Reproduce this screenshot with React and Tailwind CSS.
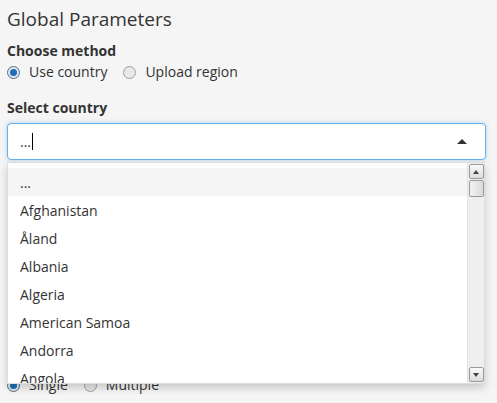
import React from "react";

const countries = ["...", "Afghanistan", "Åland", "Albania", "Algeria", "American Samoa", "Andorra", "Angola"];

const Radio = ({ checked, label }) => (
  <label className="flex items-center gap-[9px]">
    <span
      className={
        "w-[13px] h-[13px] rounded-full border flex items-center justify-center " +
        (checked ? "border-[#5b6b7a] bg-[#dfe8f0]" : "border-[#a0a0a0] bg-[#e8e8e8]")
      }
    >
      {checked && <span className="w-[7px] h-[7px] rounded-full bg-[#1e6fb8]" />}
    </span>
    <span>{label}</span>
  </label>
);

export default function App() {
  return (
    <div
      className="w-[497px] h-[403px] bg-[#f5f5f5] text-[#333] overflow-hidden relative"
      style={{ fontFamily: "'Open Sans', 'DejaVu Sans', sans-serif" }}
    >
      <div className="px-[7px] pt-[5px]">
        <h2 className="text-[19px] leading-[28px] text-[#333]">Global Parameters</h2>

        <div className="mt-[9px] text-[14px] font-bold leading-[18px]">Choose method</div>
        <div className="flex items-center gap-[16px] text-[14px] leading-[20px] mt-[2px]">
          <Radio checked label="Use country" />
          <Radio label="Upload region" />
        </div>

        <div className="mt-[17px] text-[14px] font-bold leading-[18px]">Select country</div>

        <div className="relative mt-[6px]">
          <div className="h-[37px] w-[479px] bg-white border border-[#66afe9] rounded-[4px] shadow-[0_0_4px_rgba(102,175,233,0.5)] flex items-center px-[12px] text-[14px]">
            <span>...</span>
            <span className="w-[1px] h-[17px] bg-black ml-[1px]" />
            <span className="ml-auto mr-[6px] w-0 h-0 border-l-[5px] border-r-[5px] border-b-[5px] border-l-transparent border-r-transparent border-b-[#333]" />
          </div>

          <div className="absolute left-0 top-[39px] w-[478px] h-[222px] bg-white border border-[#ddd] shadow-[0_4px_8px_rgba(0,0,0,0.18)] z-10 flex overflow-hidden">
            <div className="flex-1 pt-[5px] overflow-hidden">
              {countries.map((c, i) => (
                <div
                  key={c}
                  className={"h-[28px] px-[12px] flex items-center text-[14px] " + (i === 0 ? "bg-[#f5f5f5]" : "")}
                >
                  {c}
                </div>
              ))}
            </div>
            <div className="w-[17px] bg-[#efefef] border-l border-[#e2e2e2] flex flex-col items-center py-[1px]">
              <div className="w-[15px] h-[15px] border border-[#999] rounded-[2px] bg-gradient-to-b from-[#fafafa] to-[#dcdcdc] flex items-center justify-center">
                <span className="w-0 h-0 border-l-[3px] border-r-[3px] border-b-[4px] border-l-transparent border-r-transparent border-b-[#444]" />
              </div>
              <div className="w-[15px] h-[17px] mt-[1px] border border-[#999] rounded-[2px] bg-gradient-to-r from-[#f3f3f3] to-[#dadada]" />
              <div className="flex-1" />
              <div className="w-[15px] h-[15px] border border-[#999] rounded-[2px] bg-gradient-to-b from-[#fafafa] to-[#dcdcdc] flex items-center justify-center">
                <span className="w-0 h-0 border-l-[3px] border-r-[3px] border-t-[4px] border-l-transparent border-r-transparent border-t-[#444]" />
              </div>
            </div>
          </div>
        </div>

        <div className="flex items-center gap-[16px] text-[14px] leading-[20px] mt-[215px]">
          <Radio checked label="Single" />
          <Radio label="Multiple" />
        </div>
      </div>
    </div>
  );
}
